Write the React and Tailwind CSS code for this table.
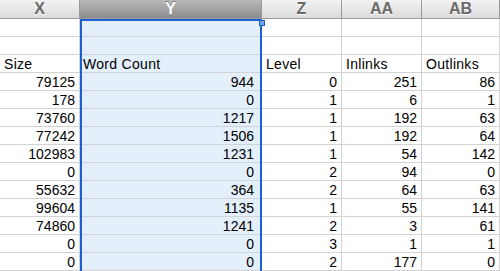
import React from "react";

const columns = [
  { key: "X", w: "w-[80px]" },
  { key: "Y", w: "w-[182px]", selected: true },
  { key: "Z", w: "w-[80px]" },
  { key: "AA", w: "w-[80px]" },
  { key: "AB", w: "flex-1" },
];

const headers = ["Size", "Word Count", "Level", "Inlinks", "Outlinks"];

const rows = [
  [79125, 944, 0, 251, 86],
  [178, 0, 1, 6, 1],
  [73760, 1217, 1, 192, 63],
  [77242, 1506, 1, 192, 64],
  [102983, 1231, 1, 54, 142],
  [0, 0, 2, 94, 0],
  [55632, 364, 2, 64, 63],
  [99604, 1135, 1, 55, 141],
  [74860, 1241, 2, 3, 61],
  [0, 0, 3, 1, 1],
  [0, 0, 2, 177, 0],
];

function Cell({ col, children, right }) {
  return (
    <div
      className={`${col.w} h-[18px] shrink-0 border-b border-r border-[#d3d3d3] leading-[19px] overflow-hidden whitespace-nowrap ${
        right ? "text-right" : "text-left tracking-[0.3px]"
      } ${col.selected ? "bg-[#e3effb] pl-[3px] pr-[7px]" : "bg-white px-[4px]"}`}
    >
      {children}
    </div>
  );
}

export default function App() {
  return (
    <div
      className="relative w-[500px] h-[271px] overflow-hidden bg-white text-[14px] text-black"
      style={{ fontFamily: '"Liberation Sans", Arial, sans-serif' }}
    >
      {/* column letters */}
      <div className="flex h-[19px]">
        {columns.map((c) => (
          <div
            key={c.key}
            className={`${c.w} shrink-0 h-[19px] border-b border-r border-[#9b9b9b] flex items-center justify-center font-bold text-[16px] ${
              c.selected
                ? "bg-gradient-to-b from-[#b9b9b9] to-[#8c8c8c] text-white [text-shadow:0_-1px_0_#6f6f6f]"
                : "bg-gradient-to-b from-[#f2f2f2] to-[#dcdcdc] text-[#6a6a6a] [text-shadow:0_1px_0_#ffffff]"
            }`}
          >
            {c.key}
          </div>
        ))}
      </div>

      {/* blank rows */}
      {[0, 1].map((i) => (
        <div key={i} className="flex">
          {columns.map((c) => (
            <Cell key={c.key} col={c} />
          ))}
        </div>
      ))}

      {/* field names */}
      <div className="flex">
        {columns.map((c, i) => (
          <Cell key={c.key} col={c}>
            {headers[i]}
          </Cell>
        ))}
      </div>

      {/* values */}
      {rows.map((r, ri) => (
        <div key={ri} className="flex">
          {columns.map((c, i) => (
            <Cell key={c.key} col={c} right>
              {r[i]}
            </Cell>
          ))}
        </div>
      ))}

      {/* column selection outline */}
      <div className="absolute left-[80px] top-[19px] w-[182px] h-[260px] border-x-2 border-t-2 border-[#1b60d3] pointer-events-none" />
      <div className="absolute left-[259px] top-[20px] w-[6px] h-[6px] bg-[#6fa3e8] border border-[#1b60d3]" />
    </div>
  );
}
